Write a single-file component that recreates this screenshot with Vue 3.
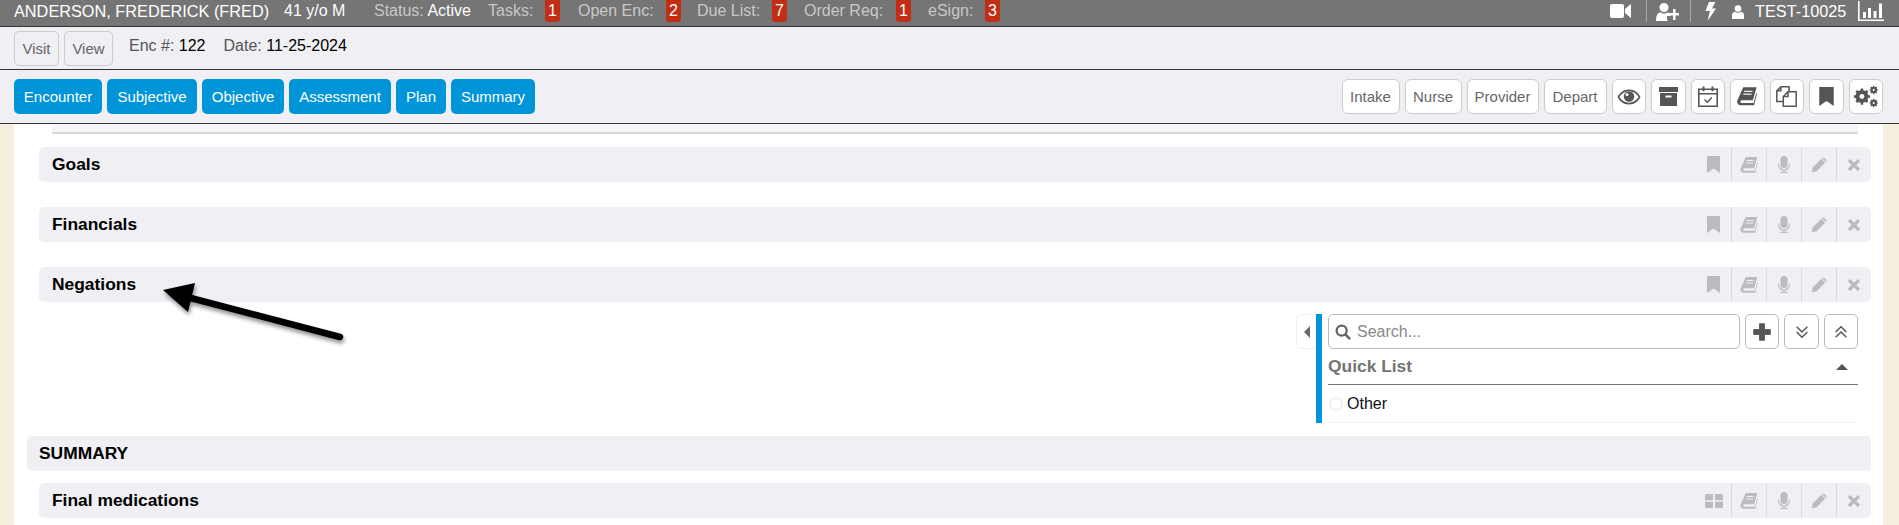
<script setup>
const tabs = ['Encounter', 'Subjective', 'Objective', 'Assessment', 'Plan', 'Summary']
const tabWidths = [88, 90, 82, 102, 50, 84]
const stats = [
  { label: 'Tasks:', n: 1, w: 57, m: 0 },
  { label: 'Open Enc:', n: 2, w: 88, m: 18 },
  { label: 'Due List:', n: 7, w: 75, m: 16 },
  { label: 'Order Req:', n: 1, w: 92, m: 17 },
  { label: 'eSign:', n: 3, w: 57, m: 17 }
]
const roles = [
  { t: 'Intake', w: 58 }, { t: 'Nurse', w: 57 }, { t: 'Provider', w: 72 }, { t: 'Depart', w: 63 }
]
const toolIcons = ['eye', 'archive', 'cal', 'book', 'copy', 'bookmark', 'gears']
const sections = ['Goals', 'Financials', 'Negations']
const rowIcons = ['book', 'mic', 'pencil', 'times']
</script>

<template>
  <div class="page">
    <svg class="defs" width="0" height="0" aria-hidden="true">
      <defs>
        <symbol id="bookmark" viewBox="0 0 13 17"><path d="M0 0h13v17L6.500 12.500 0 17z" fill="currentColor"/></symbol>
        <symbol id="book" viewBox="0 0 24 22"><path d="M7.500 0H23.500L19 15.500H5.500C3.800 15.500 3.600 18.800 5.500 18.800H20L23.200 6.500 24 7.800 20.500 21.500H4.500C1 21.500 -.5 18.500 .5 15.500z" fill="currentColor"/><path d="M8.500 4.800h10M7.500 8.200h10" stroke="#efeff4" stroke-width="1.400" fill="none"/></symbol>
        <symbol id="mic" viewBox="0 0 12 17"><rect x="2.500" y="0" width="7" height="12" rx="3.500" fill="currentColor"/><path d="M.7 7.500v1.300a5.300 5.300 0 0 0 10.600 0V7.500M6 14v2.300M2.500 16.400h7" stroke="currentColor" stroke-width="1.200" fill="none"/></symbol>
        <symbol id="pencil" viewBox="0 0 24 24"><path d="M1 23l1.800-7.500L15.500 2.800l5.700 5.700L8.500 21.200zM17.200 1.200a2 2 0 0 1 2.600 0l3 3a2 2 0 0 1 0 2.600l-.6.6-5.600-5.600z" fill="currentColor"/></symbol>
        <symbol id="times" viewBox="0 0 24 24"><path d="M5.500 1.500L12 8l6.500-6.500 4 4L16 12l6.500 6.500-4 4L12 16l-6.500 6.500-4-4L8 12 1.500 5.500z" fill="currentColor"/></symbol>
        <symbol id="grid" viewBox="0 0 18 14"><path d="M0 1.500A1.500 1.500 0 0 1 1.500 0H8v6.300H0zM10 0h6.500A1.500 1.500 0 0 1 18 1.500v4.800h-8zM0 7.800h8V14H1.500A1.500 1.500 0 0 1 0 12.500zM10 7.800h8v4.700a1.500 1.500 0 0 1-1.500 1.500H10z" fill="currentColor"/></symbol>
        <symbol id="eye" viewBox="0 0 24 24"><path fill-rule="evenodd" d="M12 4.500C6.500 4.500 2.500 8 .5 12c2 4 6 7.500 11.500 7.500S21.500 16 23.500 12C21.500 8 17.500 4.500 12 4.500zM12 6.300c4 0 7.500 2.300 9.600 5.700-2.100 3.400-5.600 5.700-9.600 5.700S4.500 15.400 2.400 12C4.500 8.600 8 6.300 12 6.300z" fill="currentColor"/><circle cx="12" cy="11.500" r="5.200" fill="currentColor"/><circle cx="10" cy="9.500" r="1.500" fill="#fff"/></symbol>
        <symbol id="archive" viewBox="0 0 19 19"><path fill-rule="evenodd" d="M0 0h19v5H0zM1 6h17v13H1zM6.500 8.500v2h6v-2z" fill="currentColor"/></symbol>
        <symbol id="cal" viewBox="0 0 20 21"><path d="M.8 3.300h18.400v16.900H.8zM.8 7.800h18.400" stroke="currentColor" stroke-width="1.600" fill="none"/><path d="M5.500 .6v4.600M14.500 .6v4.600" stroke="currentColor" stroke-width="2" fill="none"/><path d="M6.500 13.500l2.800 2.800 4.500-4.800" stroke="currentColor" stroke-width="1.400" fill="none"/></symbol>
        <symbol id="copy" viewBox="0 0 21 21"><path d="M4.800 .8H13V6M4.800 .8L.8 4.800V15.500H7M4.800 .8V4.800H.8" stroke="currentColor" stroke-width="1.500" fill="none"/><path d="M12 5.700H20.200V20.200H7.300V10.500zM12 5.700V10.500H7.300" stroke="currentColor" stroke-width="1.500" fill="none"/></symbol>
        <symbol id="gears" viewBox="0 0 32 28"><g fill="none" stroke="currentColor"><circle cx="11" cy="14" r="5.500" stroke-width="5"/><path d="M11 4v20M1 14h20M4 7l14 14M18 7L4 21" stroke-width="3"/><circle cx="25.500" cy="6" r="2.800" stroke-width="2.600"/><path d="M25.500 .8v10.400M20.300 6h10.400M21.800 2.300l7.400 7.400M29.200 2.300l-7.400 7.400" stroke-width="1.500"/><circle cx="25.500" cy="22" r="2.800" stroke-width="2.600"/><path d="M25.500 16.800v10.400M20.300 22h10.400M21.800 18.300l7.400 7.400M29.200 18.300l-7.400 7.400" stroke-width="1.500"/></g><circle cx="11" cy="14" r="3" fill="#fff"/><circle cx="25.500" cy="6" r="1.300" fill="#fff"/><circle cx="25.500" cy="22" r="1.300" fill="#fff"/></symbol>
        <symbol id="search" viewBox="0 0 24 24"><circle cx="10" cy="10" r="7.500" stroke="currentColor" stroke-width="3.500" fill="none"/><path d="M15.500 15.500l6 6" stroke="currentColor" stroke-width="4" stroke-linecap="round"/></symbol>
        <symbol id="plus" viewBox="0 0 24 24"><path d="M9 2h6v7h7v6h-7v7H9v-7H2V9h7z" fill="currentColor" stroke="currentColor" stroke-linejoin="round"/></symbol>
        <symbol id="down2" viewBox="0 0 24 24"><path d="M4 4l8 8 8-8M4 12l8 8 8-8" stroke="currentColor" stroke-width="2.200" fill="none"/></symbol>
        <symbol id="up2" viewBox="0 0 24 24"><path d="M4 12l8-8 8 8M4 20l8-8 8 8" stroke="currentColor" stroke-width="2.200" fill="none"/></symbol>
      </defs>
    </svg>

    <header class="status">
      <span class="name">ANDERSON, FREDERICK (FRED)</span>
      <span class="age">41 y/o M</span>
      <span class="muted status-label">Status: <b>Active</b></span>
      <span v-for="s in stats" :key="s.label" class="stat" :style="{ marginLeft: s.m + 'px' }">
        <span class="muted stat-label" :style="{ width: s.w + 'px' }">{{ s.label }}</span>
        <span class="badge">{{ s.n }}</span>
      </span>
      <span class="status-right">
        <svg class="top-video" viewBox="0 0 21 16"><path d="M2 1h10a2 2 0 0 1 2 2v10a2 2 0 0 1-2 2H2a2 2 0 0 1-2-2V3a2 2 0 0 1 2-2zM15 6l6-5v14l-6-5z" fill="#fff"/></svg>
        <i class="sep sep-a"></i>
        <svg class="top-adduser" viewBox="0 0 23 18"><circle cx="8" cy="4.500" r="4.500" fill="#fff"/><path d="M0 18c0-7 2.500-8.500 4.500-8.500 2 1.500 5 1.500 7 0 1 0 2 .4 2.800 1.500v2h-3.300v4l1 1z" fill="#fff"/><path d="M17 6h2.600v4H23v2.600h-3.400V17H17v-4.400h-4V10h4z" fill="#fff"/></svg>
        <i class="sep sep-b"></i>
        <svg class="top-bolt" viewBox="0 0 11 19"><path d="M4 0h6.500L7 6.500h4L2.500 19 5 9H.5z" fill="#fff"/></svg>
        <svg class="top-user" viewBox="0 0 12 14"><circle cx="6" cy="3.500" r="3.300" fill="#fff"/><path d="M0 14V10.500C0 8 1.500 6.800 3 6.800c1.800 1.200 4.200 1.200 6 0 1.500 0 3 1.200 3 3.700V14z" fill="#fff"/></svg>
        <span class="code">TEST-10025</span>
        <svg class="top-chart" viewBox="0 0 26 20"><path d="M.8 0v19.200H26" stroke="#fff" stroke-width="1.600" fill="none"/><path d="M5 11h3v6H5zM10 7h3v10h-3zM15.500 10h3v7h-3zM21 2.500h3V17h-3z" fill="#fff"/></svg>
      </span>
    </header>

    <div class="encbar">
      <button class="ghost visit">Visit</button>
      <button class="ghost view">View</button>
      <span class="enc-label">Enc #: <b>122</b></span>
      <span class="date-label">Date: <b>11-25-2024</b></span>
    </div>

    <nav class="tabs">
      <button v-for="(t, i) in tabs" :key="t" class="tab" :style="{ width: tabWidths[i] + 'px' }">{{ t }}</button>
      <span class="tools">
        <button v-for="r in roles" :key="r.t" class="tool" :style="{ width: r.w + 'px' }">{{ r.t }}</button>
        <button v-for="ic in toolIcons" :key="ic" class="tool icon">
          <svg :class="'tool-svg ' + ic"><use :href="'#' + ic" /></svg>
        </button>
      </span>
    </nav>

    <main class="body">
      <div class="sheet">
        <div class="strip"></div>

        <template v-for="s in sections" :key="s">
          <div class="row">
            <span class="row-title">{{ s }}</span>
            <span class="row-icons">
              <span class="cell first"><svg class="ri bookmark"><use href="#bookmark" /></svg></span>
              <span v-for="ic in rowIcons" :key="ic" class="cell"><svg class="ri" :class="ic"><use :href="'#' + ic" /></svg></span>
            </span>
          </div>
        </template>

        <div class="panel">
          <button class="collapse"><span class="caret-left"></span></button>
          <div class="panel-main">
            <div class="search-line">
              <label class="search">
                <svg class="search-ic"><use href="#search" /></svg>
                <span class="placeholder">Search...</span>
              </label>
              <button class="sq plus"><svg class="plus-ic"><use href="#plus" /></svg></button>
              <button class="sq down"><svg class="arrow-ic"><use href="#down2" /></svg></button>
              <button class="sq up"><svg class="arrow-ic"><use href="#up2" /></svg></button>
            </div>
            <div class="quick">
              <span>Quick List</span>
              <span class="caret-up"></span>
            </div>
            <div class="item"><span class="radio"></span>Other</div>
          </div>
        </div>

        <div class="summary">SUMMARY</div>

        <div class="row last">
          <span class="row-title">Final medications</span>
          <span class="row-icons">
            <span class="cell first"><svg class="ri gridic"><use href="#grid" /></svg></span>
            <span v-for="ic in rowIcons" :key="ic" class="cell"><svg class="ri" :class="ic"><use :href="'#' + ic" /></svg></span>
          </span>
        </div>

        <svg class="arrow" viewBox="0 0 200 70" width="200" height="70">
          <defs>
            <filter id="sh" x="-10%" y="-20%" width="120%" height="150%">
              <feDropShadow dx="1" dy="3" stdDeviation="2" flood-color="#000" flood-opacity=".45" />
            </filter>
          </defs>
          <g filter="url(#sh)">
            <path d="M0 13L32 6 25 35z" fill="#000" />
            <path d="M20 19L177 60" stroke="#000" stroke-width="6.500" stroke-linecap="round" />
          </g>
        </svg>
      </div>
    </main>
  </div>
</template>

<style>
html, body { margin: 0; background: #fff; overflow: hidden; }
</style>

<style scoped>
.page {
  width: 1899px;
  height: 525px;
  overflow: hidden;
  font-family: "Liberation Sans", Arial, sans-serif;
  font-size: 16px;
  color: #000;
  display: flex;
  flex-direction: column;
}
.defs { position: absolute; }
button { font-family: inherit; margin: 0; padding: 0; cursor: pointer; }
b { font-weight: 400; }

.status {
  height: 26px;
  flex: none;
  background: #757575;
  border-bottom: 1px solid #333;
  color: #fff;
  display: flex;
  align-items: flex-start;
  line-height: 22px;
  padding-left: 14px;
}
.name { width: 270px; font-size: 16.300px; }
.age { width: 90px; }
.muted { color: #c8c8c8; }
.status-label { width: 114px; }
.status-label b { color: #fff; }
.stat { display: flex; }
.stat-label { display: block; }
.badge {
  width: 15px;
  height: 22px;
  background: #c22d14;
  border-radius: 0 0 3px 3px;
  text-align: center;
  color: #fff;
  font-size: 16px;
}
.status-right {
  position: relative;
  margin-left: auto;
  width: 290px;
  height: 26px;
}
.status-right > * { position: absolute; }
.top-video { left: 1px; top: 3px; width: 21px; height: 16px; }
.sep { top: 0; width: 1px; height: 22px; background: #a8a8a8; }
.sep-a { left: 37px; }
.sep-b { left: 81px; }
.top-adduser { left: 47px; top: 3px; width: 23px; height: 18px; }
.top-bolt { left: 96px; top: 2px; width: 11px; height: 19px; }
.top-user { left: 123px; top: 5px; width: 12px; height: 14px; }
.code { left: 146px; top: 0; font-size: 16.300px; }
.top-chart { left: 249px; top: 1px; width: 26px; height: 20px; }

.encbar {
  height: 43px;
  flex: none;
  box-sizing: border-box;
  background: #efeff4;
  border-bottom: 1px solid #333;
  display: flex;
  align-items: flex-start;
  padding: 4px 0 0 14px;
  color: #555;
  line-height: 30px;
}
.ghost {
  height: 35px;
  background: #efeff4;
  border: 1px solid #ccc;
  border-radius: 5px;
  color: #666;
  font-size: 15px;
}
.visit { width: 45px; }
.view { width: 49px; margin-left: 5px; }
.enc-label { margin-left: 16px; }
.enc-label b, .date-label b { color: #000; }
.date-label { margin-left: 18px; }

.tabs {
  flex: none;
  background: #efeff4;
  border-bottom: 1px solid #333;
  display: flex;
  align-items: flex-start;
  gap: 5px;
  padding: 9px 16px 0 14px;
  box-sizing: border-box;
  height: 54px;
}
.tab {
  height: 35px;
  background: #0095d9;
  color: #fff;
  border: 0;
  border-radius: 5px;
  font-size: 15px;
}
.tools { margin-left: auto; display: flex; gap: 5px; }
.tool {
  height: 35px;
  background: #fff;
  border: 1px solid #ccc;
  border-radius: 6px;
  color: #666;
  font-size: 15px;
}
.tool.icon {
  width: 34.500px;
  display: flex;
  align-items: center;
  justify-content: center;
  color: #555;
}
.tool-svg { width: 19px; height: 19px; }
.tool-svg.eye { width: 24px; height: 24px; }
.tool-svg.cal { width: 20px; height: 21px; }
.tool-svg.book { width: 20px; height: 19px; }
.tool-svg.copy { width: 21px; height: 21px; }
.tool-svg.gears { width: 26px; height: 23px; }
.tool-svg.bookmark { width: 15px; height: 19px; }

.body {
  flex: 1;
  min-height: 0;
  background: #f5efe0;
  padding: 0 16px 0 14px;
}
.sheet {
  position: relative;
  height: 100%;
  background: #fff;
  padding: 0 12px 0 25px;
}
.strip {
  height: 8px;
  margin: 0 13px 13px 13px;
  background: #f6f6f8;
  border-bottom: 2px solid #d9d9dc;
}
.row {
  height: 35px;
  background: #efeff4;
  border-radius: 5px;
  display: flex;
  align-items: center;
  padding-left: 13px;
  margin-bottom: 25px;
}
.row-title { font-weight: 700; font-size: 17.400px; color: #000; }
.row-icons { margin-left: auto; display: flex; height: 100%; }
.cell {
  width: 35px;
  box-sizing: border-box;
  display: flex;
  align-items: center;
  justify-content: center;
  color: #bcbcc0;
  border-left: 1px solid #dcdce0;
}
.cell.first { border-left: 0; }
.ri { width: 18px; height: 16px; }
.ri.bookmark { width: 13px; height: 17px; }
.ri.mic { width: 12px; height: 17px; }
.ri.pencil { width: 16px; height: 16px; }
.ri.times { width: 14px; height: 14px; }
.ri.gridic { width: 18px; height: 14px; }
.row + .panel { margin-top: -13px; }

.panel {
  display: flex;
  justify-content: flex-end;
  padding-right: 13px;
  height: 109px;
  margin-bottom: 13px;
}
.collapse {
  width: 20px;
  height: 35px;
  background: #fff;
  border: 1px solid #efeff4;
  border-right: 0;
  border-radius: 5px 0 0 5px;
  display: flex;
  align-items: center;
  justify-content: center;
}
.caret-left {
  width: 0;
  height: 0;
  border: 6px solid transparent;
  border-left: 0;
  border-right: 6px solid #666;
}
.panel-main {
  width: 530px;
  border-left: 6px solid #0095d9;
  padding-left: 6px;
}
.search-line { display: flex; gap: 5px; }
.search {
  width: 412px;
  height: 35px;
  box-sizing: border-box;
  border: 1px solid #bbb;
  border-radius: 5px;
  display: flex;
  align-items: center;
  padding-left: 6px;
  color: #888;
}
.search-ic { width: 16px; height: 16px; color: #666; margin-right: 6px; }
.sq {
  width: 34px;
  height: 35px;
  background: #fff;
  border: 1px solid #bbb;
  border-radius: 5px;
  color: #555;
  display: flex;
  align-items: center;
  justify-content: center;
}
.sq.down { width: 35px; }
.plus-ic { width: 20px; height: 20px; }
.arrow-ic { width: 16px; height: 16px; }
.quick {
  height: 35px;
  display: flex;
  align-items: center;
  justify-content: space-between;
  border-bottom: 1px solid #777;
  color: #757575;
  font-weight: 700;
  font-size: 17.400px;
  padding-right: 10px;
}
.caret-up {
  width: 0;
  height: 0;
  border: 6px solid transparent;
  border-top: 0;
  border-bottom: 6px solid #555;
}
.item {
  height: 38px;
  box-sizing: border-box;
  border-bottom: 1px solid #efeff4;
  display: flex;
  align-items: center;
  font-size: 16px;
  color: #111;
}
.radio {
  width: 10px;
  height: 10px;
  border: 2px solid #efeff4;
  border-radius: 50%;
  margin: 0 4px 0 1px;
}
.summary {
  height: 35px;
  background: #efeff4;
  border-radius: 5px;
  margin: 0 0 12px -12px;
  padding-left: 12px;
  font-weight: 700;
  font-size: 17.400px;
  line-height: 34px;
}
.arrow {
  position: absolute;
  left: 149px;
  top: 153px;
  overflow: visible;
  pointer-events: none;
}
</style>
